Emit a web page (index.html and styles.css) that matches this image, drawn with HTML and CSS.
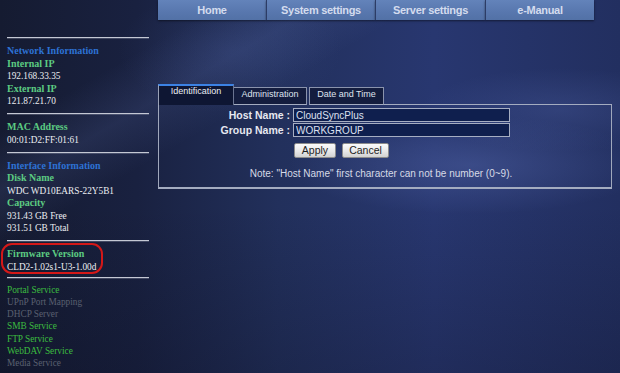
FILE: index.html
```html
<!DOCTYPE html>
<html>
<head>
<meta charset="utf-8">
<link rel="stylesheet" href="styles.css">
</head>
<body>
<div class="page">
  <nav class="topnav">
    <a class="navbtn">Home</a>
    <a class="navbtn">System settings</a>
    <a class="navbtn wide">Server settings</a>
    <a class="navbtn">e-Manual</a>
  </nav>
  <div class="main">
    <aside class="sidebar">
      <section class="sec">
        <div class="head">Network Information</div>
        <div class="label">Internal IP</div>
        <div class="val">192.168.33.35</div>
        <div class="label">External IP</div>
        <div class="val">121.87.21.70</div>
      </section>
      <section class="sec">
        <div class="label">MAC Address</div>
        <div class="val">00:01:D2:FF:01:61</div>
      </section>
      <section class="sec">
        <div class="head">Interface Information</div>
        <div class="label">Disk Name</div>
        <div class="val">WDC WD10EARS-22Y5B1</div>
        <div class="label">Capacity</div>
        <div class="val">931.43 GB Free</div>
        <div class="val">931.51 GB Total</div>
      </section>
      <section class="sec fw">
        <div class="label">Firmware Version</div>
        <div class="val">CLD2-1.02s1-U3-1.00d</div>
        <div class="highlight"></div>
      </section>
      <section class="sec svcs">
        <div class="svc on">Portal Service</div>
        <div class="svc off">UPnP Port Mapping</div>
        <div class="svc off">DHCP Server</div>
        <div class="svc on">SMB Service</div>
        <div class="svc on">FTP Service</div>
        <div class="svc on">WebDAV Service</div>
        <div class="svc off">Media Service</div>
      </section>
    </aside>
    <div class="content">
      <div class="tabs">
        <div class="tab active">Identification</div>
        <div class="tab t2">Administration</div>
        <div class="tab t3">Date and Time</div>
        <div class="tabfill"></div>
      </div>
      <div class="panel">
        <div class="form">
          <label class="flabel">Host Name :</label>
          <input class="finput" type="text" value="CloudSyncPlus">
          <label class="flabel">Group Name :</label>
          <input class="finput" type="text" value="WORKGROUP">
          <div class="btns">
            <button class="btn apply">Apply</button>
            <button class="btn cancel">Cancel</button>
          </div>
        </div>
        <div class="note">Note: "Host Name" first character can not be number (0~9).</div>
      </div>
    </div>
  </div>
</div>
</body>
</html>
```

FILE: styles.css
```css
html, body {
  margin: 0;
  padding: 0;
}
body {
  width: 620px;
  height: 373px;
  overflow: hidden;
  background-color: #1c2444;
}
.page {
  width: 620px;
  height: 373px;
  overflow: hidden;
  background:
    radial-gradient(ellipse 260px 70px at 470px 165px, rgba(95,115,185,0.35), rgba(95,115,185,0) 70%),
    radial-gradient(ellipse 200px 60px at 560px 110px, rgba(90,110,180,0.25), rgba(90,110,180,0) 70%),
    radial-gradient(ellipse 160px 90px at 230px 50px, rgba(80,100,170,0.18), rgba(80,100,170,0) 70%),
    linear-gradient(150deg, rgba(0,0,0,0) 18%, rgba(110,130,200,0.14) 26%, rgba(0,0,0,0) 34%),
    linear-gradient(180deg, rgba(0,0,0,0) 55%, rgba(10,12,30,0.25) 100%),
    linear-gradient(90deg, #151b31 0%, #192140 22%, #22305c 45%, #283770 70%, #222f60 100%);
  font-family: "Liberation Sans", Arial, sans-serif;
}

/* top navigation */
.topnav {
  display: flex;
  height: 20px;
  padding-left: 158px;
}
.navbtn {
  width: 108px;
  height: 20px;
  display: flex;
  align-items: center;
  justify-content: center;
  background: linear-gradient(180deg, #6383ba 0%, #5877ae 60%, #5271a6 100%);
  border-left: 1px solid #2c3c66;
  box-shadow: 0 1px 2px rgba(0,0,0,0.5);
  color: #d4dcee;
  font-weight: bold;
  font-size: 11px;
  letter-spacing: -0.3px;
}
.navbtn:first-child {
  border-left: none;
}
.navbtn.wide {
  width: 109px;
}

.main {
  display: flex;
}

/* sidebar */
.sidebar {
  width: 142px;
  padding: 17px 1px 0 7px;
  position: relative;
  font-family: "Liberation Serif", "Times New Roman", serif;
}
.sec {
  border-top: 1px solid #c4c8d4;
  box-shadow: inset 0 1px 0 rgba(150,155,175,0.35);
  padding: 7px 0 5.5px;
  position: relative;
}
.sec.fw {
  padding-bottom: 4px;
}
.sec.svcs {
  padding-top: 5.5px;
}
.head, .label {
  font-weight: bold;
  font-size: 10px;
  line-height: 12.5px;
}
.head {
  color: #2d72d4;
}
.label {
  color: #5ccb82;
}
.val {
  color: #eceef2;
  font-size: 9.3px;
  line-height: 12.5px;
}
.svc {
  font-size: 9.3px;
  line-height: 12.3px;
}
.svc.on {
  color: #3cbc40;
}
.svc.off {
  color: #5a6070;
}
.highlight {
  position: absolute;
  left: -6px;
  top: 1.5px;
  width: 98px;
  height: 27px;
  border: 2.5px solid #d41818;
  border-radius: 11px;
}

/* content */
.content {
  padding: 64px 0 0 8px;
  width: 454px;
}
.tabs {
  display: flex;
  align-items: flex-end;
  height: 21px;
  font-size: 9px;
  color: #dfe3ee;
}
.tab {
  box-sizing: border-box;
  text-align: center;
  line-height: 11px;
}
.tab.active {
  width: 76px;
  height: 21px;
  border-top: 2px solid #3c82e4;
  border-left: 1px solid #9aa2b6;
  border-right: 1px solid #6a7490;
  background: #0e1633;
  padding-top: 0;
  color: #eceef4;
}
.tab.t2, .tab.t3 {
  height: 18px;
  border-top: 1px solid #8a93ac;
  border-right: 1px solid #8a93ac;
  border-bottom: 1px solid #a4acc0;
  background: #141d3e;
  padding-top: 1px;
}
.tab.t2 {
  width: 73px;
}
.tab.t3 {
  width: 75px;
  margin-left: 2px;
  border-left: 1px solid #8a93ac;
}
.tabfill {
  flex: 1;
  height: 0;
  border-bottom: 1px solid #a4acc0;
}
.panel {
  box-sizing: border-box;
  width: 454px;
  border-left: 1px solid #a0a8bc;
  border-right: 1px solid #a0a8bc;
  border-bottom: 2px solid #a4acc0;
  padding: 3px 0 7px;
}
.form {
  display: grid;
  grid-template-columns: 131px 217px;
  column-gap: 3px;
  row-gap: 1px;
  align-items: center;
}
.flabel {
  text-align: right;
  font-weight: bold;
  font-size: 10.5px;
  color: #e6e8f0;
  line-height: 14px;
}
.finput {
  box-sizing: border-box;
  width: 217px;
  height: 14px;
  margin: 0;
  padding: 0 2px;
  border: 1px solid #a6aec2;
  background: #0f1f4e;
  color: #dce0f0;
  font-family: "Liberation Sans", Arial, sans-serif;
  font-size: 10px;
  line-height: 12px;
}
.btns {
  grid-column: 2;
  display: flex;
  gap: 6px;
  margin-top: 5px;
  padding-left: 1px;
}
.btn {
  box-sizing: border-box;
  height: 15px;
  margin: 0;
  padding: 0;
  border: 1px solid #8c8c8c;
  border-radius: 2px;
  background: linear-gradient(180deg, #fbfbfb 0%, #e8e8e8 55%, #d2d2d2 100%);
  color: #1e1e1e;
  font-family: "Liberation Sans", Arial, sans-serif;
  font-size: 10.5px;
  line-height: 13px;
}
.btn.apply {
  width: 42px;
}
.btn.cancel {
  width: 47px;
}
.note {
  margin-top: 10px;
  padding-right: 8px;
  text-align: center;
  font-size: 10px;
  line-height: 12px;
  color: #d6dae6;
}
```
